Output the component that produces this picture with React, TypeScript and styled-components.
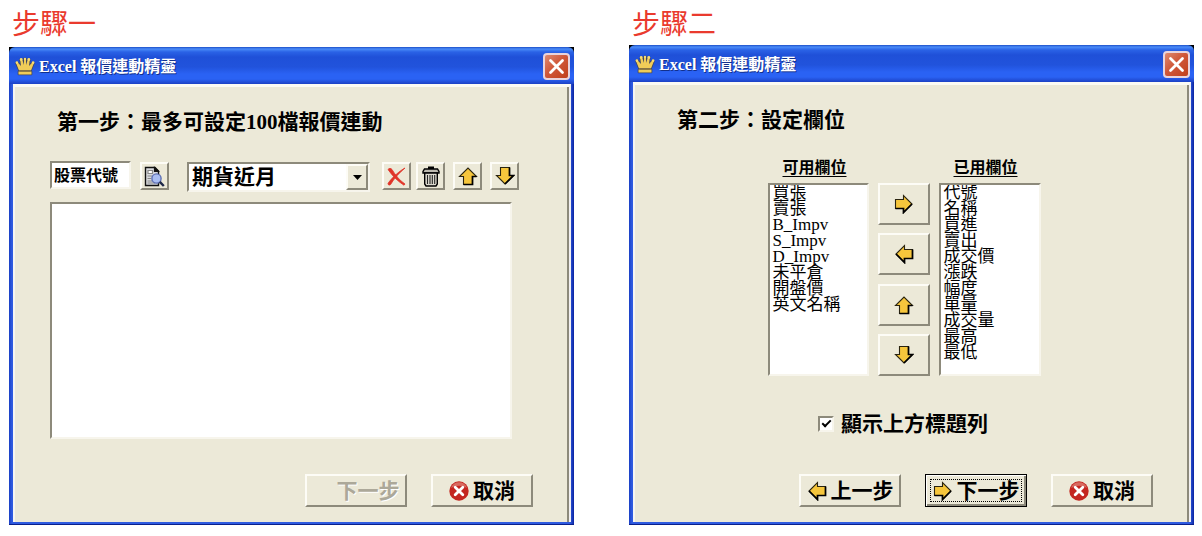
import React from "react";
import styled, { createGlobalStyle, css } from "styled-components";

const face = "#ece9d8";
const shade = "#8d8a7b";

const GlobalStyle = createGlobalStyle`
  *, *::before, *::after { box-sizing: border-box; }
  body {
    margin: 0;
    background: #fff;
    color: #000;
    font-family: "Liberation Serif", "Noto Sans CJK TC", serif;
  }
  button, input, select { font-family: inherit; color: inherit; margin: 0; }
`;

const raised = css`
  border: 2px solid;
  border-color: #fdfcf6 ${shade} ${shade} #fdfcf6;
`;

const sunken = css`
  border: 2px solid;
  border-color: ${shade} #f7f5ec #f7f5ec ${shade};
  background: #fff;
`;

const Page = styled.main`
  display: grid;
  grid-template-columns: 1fr 1fr;
  gap: 55px;
  padding: 0 8px 11px 9px;
`;

const Step = styled.section`
  display: flex;
  flex-direction: column;
`;

const StepTitle = styled.h2<{ $height: number }>`
  margin: 0;
  padding: 5px 0 0 3px;
  height: ${(p) => p.$height}px;
  font-size: 28px;
  line-height: 40px;
  font-weight: 400;
  color: #ea3a2e;
`;

const Window = styled.div`
  flex: 1;
  display: flex;
  flex-direction: column;
  background:
    linear-gradient(#000, #000) 0 0 / 100% 8px no-repeat,
    linear-gradient(90deg, #1a3fc4, #2f5be0 3px, #2f5be0 calc(100% - 4px), #0a22a0);
  border-bottom: 1px solid #0a1f8c;
  padding: 0 3px 2px 4px;
`;

const TitleBar = styled.header`
  display: flex;
  align-items: center;
  gap: 4px;
  height: 37px;
  margin: 0 -3px 0 -4px;
  padding: 2px 4px 0 6px;
  border-radius: 6px 6px 0 0;
  background: linear-gradient(180deg, #1c4fc8 0, #4a8cf8 2px, #2a62e6 5px, #1f50d8 10px, #2153dc 20px, #2a62f4 27px, #2a62f4 32px, #1c41c4 37px);
`;

const TitleText = styled.h1`
  flex: 1;
  margin: 0;
  font-size: 16px;
  line-height: 24px;
  font-weight: 700;
  color: #fff;
  text-shadow: 1px 1px 0 #12308c;
`;

const CloseButton = styled.button`
  display: grid;
  place-items: center;
  width: 27px;
  height: 27px;
  padding: 0;
  border: 2px solid #e8d4dc;
  border-radius: 4px;
  background: linear-gradient(135deg, #dd8a70, #d0583a 45%, #c0401c);
`;

const Body = styled.div`
  flex: 1;
  display: flex;
  flex-direction: column;
  background: ${face};
  border-style: solid;
  border-width: 3px 2px 0 2px;
  border-color: #fbfaf3 #f1eff0 ${face} #f6f5f2;
  box-shadow: inset -2px 0 0 ${shade};
  padding: 21px 39px 15px 35px;
`;

const Prompt = styled.p`
  margin: 0 0 0 7px;
  font-size: 21px;
  line-height: 28px;
  font-weight: 700;
`;

const Toolbar = styled.div`
  display: flex;
  align-items: flex-start;
  margin-top: 25px;
`;

const CodeInput = styled.input`
  ${sunken}
  width: 81px;
  height: 28px;
  padding: 0 2px 3px;
  border-radius: 0;
  font-size: 16px;
  line-height: 20px;
  font-weight: 700;
`;

const ToolButton = styled.button<{ $gap: number }>`
  ${raised}
  display: grid;
  place-items: center;
  width: 29px;
  height: 28px;
  margin: 1px 0 0 ${(p) => p.$gap}px;
  padding: 0;
  background: ${face};
`;

const SelectBox = styled.div`
  ${sunken}
  position: relative;
  width: 183px;
  height: 30px;
  margin: 1px 0 0 18px;
`;

const Select = styled.select`
  appearance: none;
  width: 100%;
  height: 26px;
  padding: 0 24px 0 3px;
  border: 0;
  background: transparent;
  font-size: 21px;
  line-height: 26px;
  font-weight: 700;
`;

const SelectArrow = styled.span`
  ${raised}
  position: absolute;
  top: 0;
  right: 0;
  display: grid;
  place-items: center;
  width: 22px;
  height: 26px;
  background: ${face};
  pointer-events: none;
`;

const EmptyList = styled.div`
  ${sunken}
  height: 237px;
  margin: 10px 18px 0 0;
`;

const Picker = styled.div`
  display: grid;
  grid-template-columns: 101px 52px 102px;
  column-gap: 9px;
  justify-content: center;
  margin: 22px 41px 0 29px;
`;

const ListField = styled.div`
  display: flex;
  flex-direction: column;
`;

const ListLabel = styled.label`
  height: 27px;
  padding-left: 15px;
  font-size: 16px;
  line-height: 24px;
  font-weight: 700;
  text-decoration: underline;
  text-underline-offset: 3px;
`;

const ListBox = styled.select`
  ${sunken}
  appearance: none;
  height: 193px;
  padding: 2px 0 0 3px;
  border-radius: 0;
  overflow: hidden;
  font-size: 17px;

  option {
    display: flex;
    align-items: flex-end;
    height: 16px;
    min-height: 16px;
    padding: 0;
    overflow: visible;
  }
`;

const MoveButtons = styled.div`
  display: flex;
  flex-direction: column;
  justify-content: space-between;
  padding-top: 27px;
`;

const MoveButton = styled.button`
  ${raised}
  display: grid;
  place-items: center;
  height: 42px;
  padding: 0;
  background: ${face};
`;

const CheckLabel = styled.label`
  display: flex;
  align-items: center;
  gap: 7px;
  margin: 34px 0 0 148px;
  font-size: 21px;
  line-height: 28px;
  font-weight: 700;
`;

const CheckBox = styled.input`
  ${sunken}
  appearance: none;
  display: grid;
  place-items: center;
  width: 16px;
  height: 16px;

  &:checked::after {
    content: "";
    width: 9px;
    height: 5px;
    margin-top: -3px;
    border: solid #000;
    border-width: 0 0 2px 2px;
    transform: rotate(-45deg);
  }
`;

const Footer = styled.footer`
  display: flex;
  justify-content: flex-end;
  gap: 24px;
  margin-top: auto;
  margin-right: -3px;
  padding-top: 35px;
`;

const CommandButton = styled.button<{ $focused?: boolean }>`
  ${raised}
  display: flex;
  align-items: center;
  justify-content: center;
  gap: 4px;
  width: 102px;
  height: 33px;
  padding: 0;
  background: ${face};
  font-size: 21px;
  line-height: 28px;
  font-weight: 700;
  white-space: nowrap;

  &:disabled {
    color: #aca899;
    text-shadow: 1px 1px 0 #fff;
  }

  ${(p) =>
    p.$focused &&
    css`
      border: 1px solid #000;
      box-shadow: inset 1px 1px 0 #fff, inset -2px -2px 0 ${shade};
      outline: 1px dotted #000;
      outline-offset: -6px;
    `}
`;

const IconSlot = styled.span`
  flex: none;
  width: 20px;
  height: 20px;
  display: grid;
`;

type Direction = "right" | "down" | "left" | "up";

const arrowPaths: Record<Direction, string> = {
  right: "M1.5 5.5H9.5V1.5L18 10L9.5 18.5V14.5H1.5Z",
  left: "M18.5 5.5H10.5V1.5L2 10L10.5 18.5V14.5H18.5Z",
  up: "M5.5 18.5V10.5H1.5L10 2L18.5 10.5H14.5V18.5Z",
  down: "M5.5 1.5V9.5H1.5L10 18L18.5 9.5H14.5V1.5Z",
};

const arrowShadows: Record<Direction, string> = {
  right: "M1.5 14.5H9.5V18.5L18 10",
  left: "M18.5 5.5V14.5H10.5V18.5L2 10",
  up: "M5.5 18.5H14.5V10.5H18.5",
  down: "M14.5 1.5V9.5H18.5L10 18",
};

const ArrowIcon = ({ dir }: { dir: Direction }) => (
  <svg width="20" height="20" viewBox="0 0 20 20" aria-hidden="true">
    <path d={arrowPaths[dir]} fill="#f6c63c" stroke="#2a2410" strokeWidth="1.1" />
    <path d={arrowShadows[dir]} fill="none" stroke="#000" strokeWidth="1.7" />
  </svg>
);

const CrownIcon = () => (
  <svg width="20" height="19" viewBox="0 0 20 19" aria-hidden="true">
    <g fill="#f0cc58" stroke="#3f4560" strokeWidth="1.6" strokeLinejoin="round" paintOrder="stroke">
      <path d="M4 13.5L1 6L2.5 5.2L6 9L5.2 2.5H7.2L9 8V1.5H11V8L12.8 2.500H14.8L14 9L17.5 5.2L19 6L16 13.5Z" />
      <path d="M3.500 14.500H16.500V17.500H3.500Z" />
    </g>
    <g fill="#f8dc74">
      <circle cx="1.900" cy="5.600" r="1.300" />
      <circle cx="6.200" cy="2.500" r="1.400" />
      <circle cx="10" cy="2" r="1.200" />
      <circle cx="13.800" cy="2.500" r="1.400" />
      <circle cx="18.100" cy="5.600" r="1.300" />
    </g>
    <path d="M4.500 14H15.500" stroke="#8a6f2a" strokeWidth="1" />
  </svg>
);

const CloseIcon = () => (
  <svg width="17" height="17" viewBox="0 0 17 17" aria-hidden="true">
    <path d="M2.5 2.5L14.5 14.5M14.5 2.5L2.5 14.5" stroke="#fff" strokeWidth="2.8" strokeLinecap="round" />
  </svg>
);

const SearchDocIcon = () => (
  <svg width="21" height="21" viewBox="0 0 21 21" aria-hidden="true">
    <path d="M1.5 1.5H11L14.5 5V19.5H1.5Z" fill="#d9dade" stroke="#111" strokeWidth="1.4" />
    <path d="M10.5 1.5V5.5H14.5Z" fill="#111" stroke="#111" strokeWidth="1.2" />
    <path d="M4 4.5H8.5V7.5H4ZM3.5 10H8M3.5 12.5H7M3.5 15H8M3.5 17H11" fill="#fff" stroke="#888" strokeWidth="1.2" />
    <circle cx="12.5" cy="12.5" r="4.6" fill="#a9bdf2" stroke="#5d6fb4" strokeWidth="1.4" />
    <path d="M15.8 15.8L19.8 20" stroke="#1d2748" strokeWidth="2.4" />
  </svg>
);

const DeleteIcon = () => (
  <svg width="19" height="19" viewBox="0 0 19 19" aria-hidden="true">
    <path d="M1 2.5C2 1 4 1 5 2.5C8 7.5 12.5 13.5 18 17L17 18.2C11 14.5 5.5 9 1 2.5Z" fill="#e03428" stroke="#e03428" strokeWidth="0.8" />
    <path d="M18 1C13 3.5 4.5 11 1 16.5C1 18 2.5 18.6 3.6 17.5C7 11.5 12.5 5.5 18 1Z" fill="#e03428" stroke="#e03428" strokeWidth="0.8" />
  </svg>
);

const TrashIcon = () => (
  <svg width="18" height="21" viewBox="0 0 18 21" aria-hidden="true">
    <path d="M6 0.5H12V3H6Z" fill="#000" />
    <path d="M2.5 3H15.5L17 5.5V7H1V5.5Z" fill="#bdbab0" stroke="#000" strokeWidth="1.4" />
    <path d="M2.7 7H15.3V18L14 20H4L2.7 18Z" fill="#dedbd0" stroke="#000" strokeWidth="1.4" />
    <path d="M5.5 9V18M8 9V18M10.3 9V18M12.7 9V18" stroke="#222" strokeWidth="1.1" />
  </svg>
);

const CancelIcon = () => (
  <svg width="20" height="20" viewBox="0 0 20 20" aria-hidden="true">
    <circle cx="10" cy="10" r="9.7" fill="#c4251f" />
    <path d="M2 7A8.5 8.5 0 0 1 18 7A11 7 0 0 0 2 7Z" fill="#d86a60" />
    <path d="M6.2 6.2L13.8 13.8M13.8 6.2L6.2 13.8" stroke="#fff" strokeWidth="2.8" strokeLinecap="round" />
  </svg>
);

const Dialog = ({ children }: { children: React.ReactNode }) => (
  <Window>
    <TitleBar>
      <CrownIcon />
      <TitleText>Excel 報價連動精靈</TitleText>
      <CloseButton type="button" aria-label="關閉">
        <CloseIcon />
      </CloseButton>
    </TitleBar>
    <Body>{children}</Body>
  </Window>
);

const CancelButton = () => (
  <CommandButton type="button">
    <IconSlot><CancelIcon /></IconSlot>
    取消
  </CommandButton>
);

const available = ["買張", "賣張", "B_Impv", "S_Impv", "D_Impv", "未平倉", "開盤價", "英文名稱"];
const used = ["代號", "名稱", "買進", "賣出", "成交價", "漲跌", "幅度", "單量", "成交量", "最高", "最低"];

const moves: { dir: Direction; label: string }[] = [
  { dir: "right", label: "加入" },
  { dir: "left", label: "移除" },
  { dir: "up", label: "上移" },
  { dir: "down", label: "下移" },
];

const FieldList = ({ id, label, items }: { id: string; label: string; items: string[] }) => (
  <ListField>
    <ListLabel htmlFor={id}>{label}</ListLabel>
    <ListBox id={id} multiple>
      {items.map((item) => (
        <option key={item}>{item}</option>
      ))}
    </ListBox>
  </ListField>
);

export default function App() {
  return (
    <>
      <GlobalStyle />
      <Page>
        <Step>
          <StepTitle $height={47}>步驟一</StepTitle>
          <Dialog>
            <Prompt>第一步：最多可設定100檔報價連動</Prompt>
            <Toolbar>
              <CodeInput type="text" defaultValue="股票代號" aria-label="股票代號" />
              <ToolButton $gap={9} type="button" aria-label="查詢"><SearchDocIcon /></ToolButton>
              <SelectBox>
                <Select aria-label="商品" defaultValue="期貨近月">
                  <option>期貨近月</option>
                </Select>
                <SelectArrow>
                  <svg width="9" height="5" viewBox="0 0 9 5" aria-hidden="true">
                    <path d="M0 0H9L4.5 5Z" />
                  </svg>
                </SelectArrow>
              </SelectBox>
              <ToolButton $gap={12} type="button" aria-label="刪除"><DeleteIcon /></ToolButton>
              <ToolButton $gap={5} type="button" aria-label="全部清除"><TrashIcon /></ToolButton>
              <ToolButton $gap={8} type="button" aria-label="上移"><ArrowIcon dir="up" /></ToolButton>
              <ToolButton $gap={8} type="button" aria-label="下移"><ArrowIcon dir="down" /></ToolButton>
            </Toolbar>
            <EmptyList role="listbox" aria-label="股票清單" />
            <Footer>
              <CommandButton type="button" disabled>
                <IconSlot />
                下一步
              </CommandButton>
              <CancelButton />
            </Footer>
          </Dialog>
        </Step>
        <Step>
          <StepTitle $height={45}>步驟二</StepTitle>
          <Dialog>
            <Prompt>第二步：設定欄位</Prompt>
            <Picker>
              <FieldList id="available" label="可用欄位" items={available} />
              <MoveButtons>
                {moves.map((m) => (
                  <MoveButton key={m.dir} type="button" aria-label={m.label}>
                    <ArrowIcon dir={m.dir} />
                  </MoveButton>
                ))}
              </MoveButtons>
              <FieldList id="used" label="已用欄位" items={used} />
            </Picker>
            <CheckLabel>
              <CheckBox type="checkbox" defaultChecked />
              顯示上方標題列
            </CheckLabel>
            <Footer>
              <CommandButton type="button">
                <IconSlot><ArrowIcon dir="left" /></IconSlot>
                上一步
              </CommandButton>
              <CommandButton type="button" $focused>
                <IconSlot><ArrowIcon dir="right" /></IconSlot>
                下一步
              </CommandButton>
              <CancelButton />
            </Footer>
          </Dialog>
        </Step>
      </Page>
    </>
  );
}
